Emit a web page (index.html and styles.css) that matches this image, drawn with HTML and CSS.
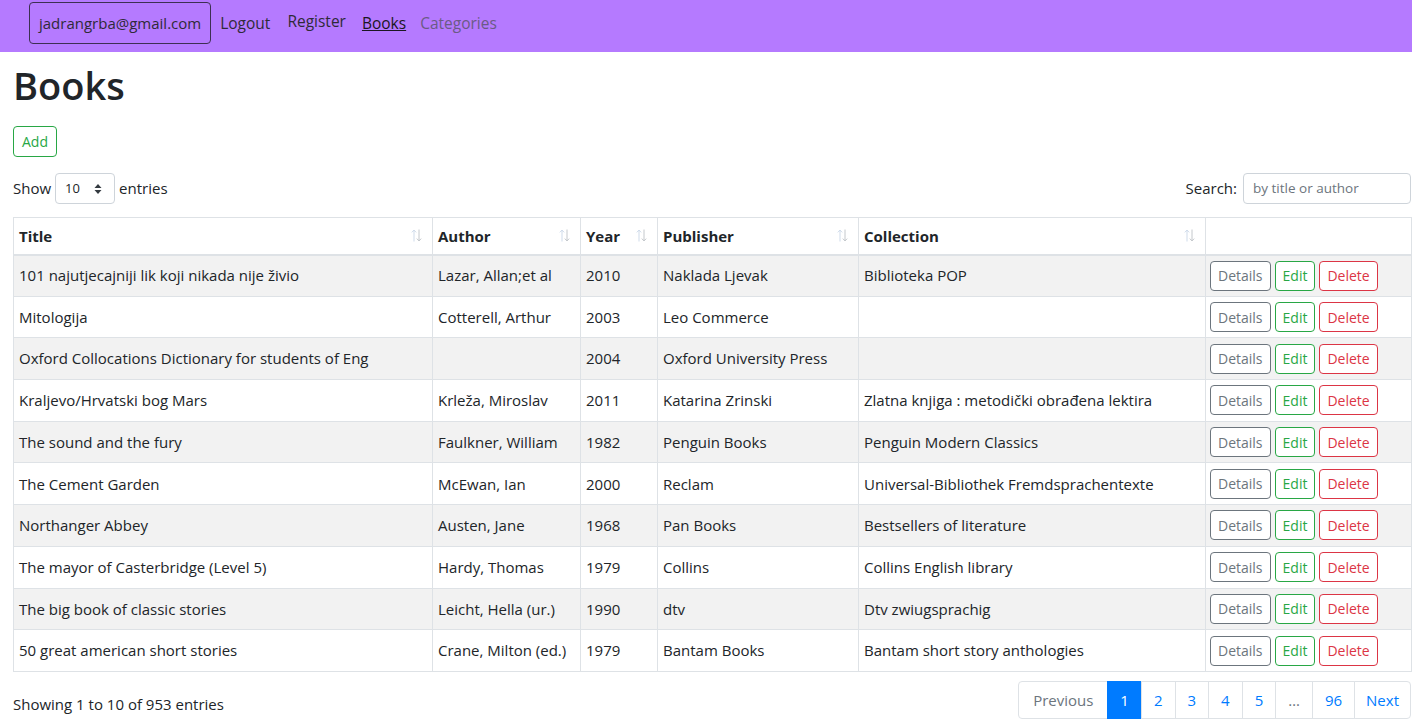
FILE: index.html
```html
<!DOCTYPE html>
<html lang="en">
<head>
<meta charset="utf-8">
<title>Books</title>
<link rel="stylesheet" href="styles.css">
</head>
<body>
<nav class="navbar">
  <span class="nav-user">jadrangrba@gmail.com</span>
  <a class="nav-link" href="#">Logout</a>
  <a class="nav-link nav-raised" href="#">Register</a>
  <a class="nav-link nav-active" href="#">Books</a>
  <a class="nav-link nav-muted" href="#">Categories</a>
</nav>
<main class="content">
  <h1 class="page-title">Books</h1>
  <button class="btn btn-add">Add</button>
  <div class="dt-top">
    <label class="dt-length">Show
      <span class="select"><span>10</span>
        <svg width="8" height="12" viewBox="0 0 8 12"><path d="M4 1 L7.5 5 H0.5 Z M4 11 L0.5 7 H7.5 Z" fill="#343a40"/></svg>
      </span> entries</label>
    <label class="dt-search">Search: <span class="search-input">by title or author</span></label>
  </div>
  <table class="books">
    <colgroup>
      <col class="c-title"><col class="c-author"><col class="c-year"><col class="c-pub"><col class="c-coll"><col class="c-act">
    </colgroup>
    <thead>
      <tr>
        <th><div class="th-in"><span>Title</span><svg class="sort" width="11" height="13" viewBox="0 0 11 13"><path d="M3 12.5V1M0.8 3.4L3 1L5.2 3.4" stroke="#cfdbea" fill="none" stroke-width="1"/><path d="M8 0.5V12M5.8 9.6L8 12L10.2 9.6" stroke="#c4c8cc" fill="none" stroke-width="1"/></svg></div></th>
        <th><div class="th-in"><span>Author</span><svg class="sort" width="11" height="13" viewBox="0 0 11 13"><path d="M3 12.5V1M0.8 3.4L3 1L5.2 3.4" stroke="#cfdbea" fill="none" stroke-width="1"/><path d="M8 0.5V12M5.8 9.6L8 12L10.2 9.6" stroke="#c4c8cc" fill="none" stroke-width="1"/></svg></div></th>
        <th><div class="th-in"><span>Year</span><svg class="sort" width="11" height="13" viewBox="0 0 11 13"><path d="M3 12.5V1M0.8 3.4L3 1L5.2 3.4" stroke="#cfdbea" fill="none" stroke-width="1"/><path d="M8 0.5V12M5.8 9.6L8 12L10.2 9.6" stroke="#c4c8cc" fill="none" stroke-width="1"/></svg></div></th>
        <th><div class="th-in"><span>Publisher</span><svg class="sort" width="11" height="13" viewBox="0 0 11 13"><path d="M3 12.5V1M0.8 3.4L3 1L5.2 3.4" stroke="#cfdbea" fill="none" stroke-width="1"/><path d="M8 0.5V12M5.8 9.6L8 12L10.2 9.6" stroke="#c4c8cc" fill="none" stroke-width="1"/></svg></div></th>
        <th><div class="th-in"><span>Collection</span><svg class="sort" width="11" height="13" viewBox="0 0 11 13"><path d="M3 12.5V1M0.8 3.4L3 1L5.2 3.4" stroke="#cfdbea" fill="none" stroke-width="1"/><path d="M8 0.5V12M5.8 9.6L8 12L10.2 9.6" stroke="#c4c8cc" fill="none" stroke-width="1"/></svg></div></th>
        <th></th>
      </tr>
    </thead>
    <tbody>
      <tr><td>101 najutjecajniji lik koji nikada nije živio</td><td>Lazar, Allan;et al</td><td>2010</td><td>Naklada Ljevak</td><td>Biblioteka POP</td><td class="acts"><button class="btn btn-sm b-det">Details</button><button class="btn btn-sm b-edit">Edit</button><button class="btn btn-sm b-del">Delete</button></td></tr>
      <tr><td>Mitologija</td><td>Cotterell, Arthur</td><td>2003</td><td>Leo Commerce</td><td></td><td class="acts"><button class="btn btn-sm b-det">Details</button><button class="btn btn-sm b-edit">Edit</button><button class="btn btn-sm b-del">Delete</button></td></tr>
      <tr><td>Oxford Collocations Dictionary for students of Eng</td><td></td><td>2004</td><td>Oxford University Press</td><td></td><td class="acts"><button class="btn btn-sm b-det">Details</button><button class="btn btn-sm b-edit">Edit</button><button class="btn btn-sm b-del">Delete</button></td></tr>
      <tr><td>Kraljevo/Hrvatski bog Mars</td><td>Krleža, Miroslav</td><td>2011</td><td>Katarina Zrinski</td><td>Zlatna knjiga : metodički obrađena lektira</td><td class="acts"><button class="btn btn-sm b-det">Details</button><button class="btn btn-sm b-edit">Edit</button><button class="btn btn-sm b-del">Delete</button></td></tr>
      <tr><td>The sound and the fury</td><td>Faulkner, William</td><td>1982</td><td>Penguin Books</td><td>Penguin Modern Classics</td><td class="acts"><button class="btn btn-sm b-det">Details</button><button class="btn btn-sm b-edit">Edit</button><button class="btn btn-sm b-del">Delete</button></td></tr>
      <tr><td>The Cement Garden</td><td>McEwan, Ian</td><td>2000</td><td>Reclam</td><td>Universal-Bibliothek Fremdsprachentexte</td><td class="acts"><button class="btn btn-sm b-det">Details</button><button class="btn btn-sm b-edit">Edit</button><button class="btn btn-sm b-del">Delete</button></td></tr>
      <tr><td>Northanger Abbey</td><td>Austen, Jane</td><td>1968</td><td>Pan Books</td><td>Bestsellers of literature</td><td class="acts"><button class="btn btn-sm b-det">Details</button><button class="btn btn-sm b-edit">Edit</button><button class="btn btn-sm b-del">Delete</button></td></tr>
      <tr><td>The mayor of Casterbridge (Level 5)</td><td>Hardy, Thomas</td><td>1979</td><td>Collins</td><td>Collins English library</td><td class="acts"><button class="btn btn-sm b-det">Details</button><button class="btn btn-sm b-edit">Edit</button><button class="btn btn-sm b-del">Delete</button></td></tr>
      <tr><td>The big book of classic stories</td><td>Leicht, Hella (ur.)</td><td>1990</td><td>dtv</td><td>Dtv zwiugsprachig</td><td class="acts"><button class="btn btn-sm b-det">Details</button><button class="btn btn-sm b-edit">Edit</button><button class="btn btn-sm b-del">Delete</button></td></tr>
      <tr><td>50 great american short stories</td><td>Crane, Milton (ed.)</td><td>1979</td><td>Bantam Books</td><td>Bantam short story anthologies</td><td class="acts"><button class="btn btn-sm b-det">Details</button><button class="btn btn-sm b-edit">Edit</button><button class="btn btn-sm b-del">Delete</button></td></tr>
    </tbody>
  </table>
  <div class="dt-bottom">
    <div class="dt-info">Showing 1 to 10 of 953 entries</div>
    <ul class="pagination">
      <li class="pg pg-disabled">Previous</li>
      <li class="pg pg-active">1</li>
      <li class="pg">2</li>
      <li class="pg">3</li>
      <li class="pg">4</li>
      <li class="pg">5</li>
      <li class="pg pg-disabled">…</li>
      <li class="pg">96</li>
      <li class="pg">Next</li>
    </ul>
  </div>
</main>
</body>
</html>
```
FILE: styles.css
```css
* { box-sizing: border-box; }
html, body { margin: 0; padding: 0; }
body {
  font-family: "Open Sans", "Noto Sans", sans-serif;
  font-size: 15px;
  color: #212529;
  background: #fff;
  line-height: 1.5;
}
.navbar {
  display: flex;
  align-items: center;
  height: 52px;
  background: #b57aff;
  padding: 0 0 0 29px;
}
.nav-user {
  border: 1px solid #3d2f52;
  border-radius: 4px;
  padding: 0 9px;
  height: 42px;
  line-height: 40px;
  margin-top: -6px;
  color: #2f2a38;
  font-size: 15px;
}
.nav-link {
  color: #2f2a38;
  text-decoration: none;
  font-size: 15.5px;
  margin-left: 9px;
  margin-top: -4px;
}
.nav-raised { margin-top: -8px; margin-left: 17px; }
.nav-active { text-decoration: underline; color: #1b1622; margin-left: 16px; }
.nav-muted { color: #6b5a85; margin-left: 14px; }
.content { padding: 0 1px 0 13px; }
.page-title {
  font-size: 38px;
  font-weight: 600;
  margin: 9px 0 17px;
  line-height: 48px;
}
.btn {
  font-family: inherit;
  background: #fff;
  border: 1px solid;
  border-radius: 4px;
  cursor: pointer;
}
.btn-add {
  color: #28a745;
  border-color: #28a745;
  font-size: 14px;
  height: 31px;
  width: 44px;
  padding: 0;
  display: block;
}
.dt-top {
  display: flex;
  justify-content: space-between;
  align-items: center;
  margin-top: 16px;
  height: 31px;
  font-size: 15px;
}
.dt-length { display: flex; align-items: center; gap: 4px; }
.select {
  display: inline-flex;
  align-items: center;
  justify-content: space-between;
  width: 60px;
  height: 31px;
  border: 1px solid #ced4da;
  border-radius: 4px;
  padding: 0 12px 0 9px;
  font-size: 13px;
}
.dt-search { display: flex; align-items: center; gap: 6px; }
.search-input {
  display: inline-block;
  width: 168px;
  height: 31px;
  line-height: 29px;
  border: 1px solid #ced4da;
  border-radius: 4px;
  padding: 0 9px;
  color: #6c757d;
  font-size: 13.5px;
}
.books {
  width: 1398px;
  border-collapse: collapse;
  table-layout: fixed;
  margin-top: 13px;
  border: 1px solid #dee2e6;
}
.c-title { width: 419px; }
.c-author { width: 148px; }
.c-year { width: 77px; }
.c-pub { width: 201px; }
.c-coll { width: 347px; }
.c-act { width: 206px; }
.books th, .books td {
  border: 1px solid #dee2e6;
  padding: 0 5px;
  text-align: left;
  white-space: nowrap;
  overflow: hidden;
}
.books th {
  height: 37px;
  font-weight: 700;
  border-bottom: 2px solid #dee2e6;
  font-size: 15px;
}
.th-in {
  display: flex;
  justify-content: space-between;
  align-items: center;
}
.sort { margin-right: 5px; }
.books td { height: 41.7px; font-size: 15px; }
.books tbody tr:nth-child(odd) { background: #f2f2f2; }
.acts { padding-left: 4px !important; }
.btn-sm {
  font-size: 14px;
  height: 30px;
  padding: 0 7px;
  margin-right: 4px;
}
.b-det { color: #6c757d; border-color: #6c757d; }
.b-edit { color: #28a745; border-color: #28a745; }
.b-del { color: #dc3545; border-color: #dc3545; }
.dt-bottom {
  display: flex;
  justify-content: space-between;
  align-items: center;
  margin-top: 9px;
}
.dt-info { font-size: 15px; margin-top: 8px; }
.pagination {
  display: flex;
  list-style: none;
  margin: 0 0 0 0;
  padding: 0;
  font-size: 15px;
}
.pg {
  height: 38px;
  line-height: 36px;
  padding: 0 12px;
  border: 1px solid #dee2e6;
  margin-left: -1px;
  color: #007bff;
  background: #fff;
}
.pg:first-child { border-radius: 4px 0 0 4px; padding: 0 14px; }
.pg:last-child { border-radius: 0 4px 4px 0; padding: 0 11px; }
.pg-disabled { color: #6c757d; }
.pg-active { background: #007bff; border-color: #007bff; color: #fff; }
```
